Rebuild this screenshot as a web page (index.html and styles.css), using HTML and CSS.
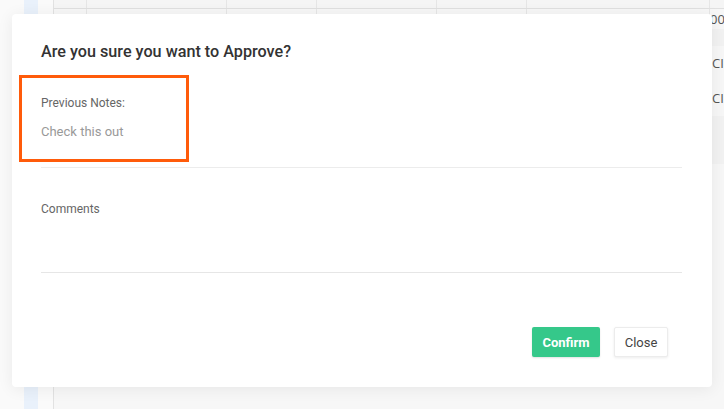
FILE: index.html
```html
<!DOCTYPE html>
<html>
<head>
<meta charset="utf-8">
<link rel="stylesheet" href="styles.css">
</head>
<body>
<div class="page">
  <div class="side"></div>
  <div class="table">
    <div class="row head">
      <div class="c c1"></div><div class="c c2"></div><div class="c c3"></div><div class="c c4"></div><div class="c c5"></div><div class="c c6"></div><div class="c c7"></div>
    </div>
    <div class="row r1">
      <div class="c c1"></div><div class="c c2"></div><div class="c c3"></div><div class="c c4"></div><div class="c c5"></div><div class="c c6"></div><div class="c c7"><span class="cut">00</span></div>
    </div>
    <div class="row r2 alt"><div class="c c7"></div></div>
    <div class="row r3"><div class="c c7"><span class="cut">CI</span></div></div>
    <div class="row r3"><div class="c c7"><span class="cut">CI</span></div></div>
    <div class="row r4 alt"><div class="c c7"></div></div>
  </div>

  <div class="modal">
    <h2 class="title">Are you sure you want to Approve?</h2>
    <div class="notes">
      <div class="label">Previous Notes:</div>
      <div class="note">Check this out</div>
    </div>
    <div class="comments">
      <div class="label">Comments</div>
      <div class="input"></div>
    </div>
    <div class="actions">
      <button class="btn confirm">Confirm</button>
      <button class="btn close">Close</button>
    </div>
  </div>
  <div class="highlight"></div>
</div>
</body>
</html>
```

FILE: styles.css
```css
* { box-sizing: border-box; }
html, body { margin: 0; padding: 0; }
body {
  width: 724px;
  height: 409px;
  overflow: hidden;
  background: #fafafa;
  font-family: Roboto, "Liberation Sans", sans-serif;
}
.page {
  position: relative;
  width: 724px;
  height: 409px;
  display: flex;
  overflow: hidden;
}
.side {
  margin-left: 24px;
  width: 14px;
  height: 409px;
  background: #e9f1fb;
  flex: none;
}
.table {
  margin-left: 15px;
  flex: 1;
  border-left: 1px solid #e2e2e2;
  background: #f7f7f7;
  overflow: hidden;
}
.row { display: flex; }
.row.head { height: 9px; border-bottom: 1px solid #e0e0e0; background: #f5f5f5; }
.row.r1 { height: 20px; }
.row.r2 { height: 17px; }
.row.r3 { height: 35px; }
.row.r4 { height: 48px; }
.c { border-right: 1px solid #e6e6e6; height: 100%; flex: none; }
.c1 { width: 33px; }
.c2 { width: 140px; }
.c3 { width: 90px; }
.c4 { width: 120px; }
.c5 { width: 90px; }
.c6 { width: 183px; }
.c7 { border-right: none; flex: 1; overflow: hidden; }
.row.r2 .c7, .row.r3 .c7, .row.r4 .c7 { margin-left: 658px; }
.row.r2 .c7, .row.r4 .c7 { background: #f2f2f2; }
.row.r3 .c7 { background: #f7f7f7; }
.cut {
  display: block;
  font-family: "Open Sans", sans-serif;
  font-size: 13px;
  color: #555;
  line-height: 18px;
  white-space: nowrap;
}
.row.r1 .cut { padding-top: 1px; }
.row.r3 .cut { line-height: 35px; }

.modal {
  position: absolute;
  left: 12px;
  top: 14px;
  width: 700px;
  height: 373px;
  background: #fff;
  border-radius: 4px;
  box-shadow: 0 2px 16px rgba(0,0,0,0.07);
  padding: 28px 30px 30px 29px;
  display: flex;
  flex-direction: column;
}
.title {
  margin: 0;
  font-size: 16.2px;
  line-height: 20px;
  font-weight: 500;
  color: #333;
}
.label {
  font-size: 12px;
  line-height: 16px;
  color: #666;
}
.notes {
  margin-top: 33px;
  padding-bottom: 26px;
  border-bottom: 1px solid #ececec;
}
.note {
  margin-top: 12px;
  font-size: 13px;
  line-height: 18px;
  color: #999;
}
.comments { margin-top: 33px; }
.input {
  height: 56px;
  border-bottom: 1px solid #e6e6e6;
}
.actions {
  margin-top: 54px;
  display: flex;
  justify-content: flex-end;
  gap: 14px;
  padding-right: 14px;
}
.btn {
  height: 30px;
  font-family: Roboto, "Liberation Sans", sans-serif;
  font-size: 13px;
  border-radius: 2px;
  padding: 0;
  cursor: pointer;
}
.confirm {
  width: 68px;
  background: #35c88a;
  color: #fff;
  font-weight: 700;
  border: none;
  box-shadow: 0 1px 2px rgba(0,0,0,0.12);
}
.close {
  width: 54px;
  background: #fff;
  color: #444;
  border: 1px solid #ececec;
  box-shadow: 0 1px 3px rgba(0,0,0,0.08);
}
.highlight {
  position: absolute;
  left: 19px;
  top: 75px;
  width: 170px;
  height: 87px;
  border: 3px solid #ff5b0a;
}
```
